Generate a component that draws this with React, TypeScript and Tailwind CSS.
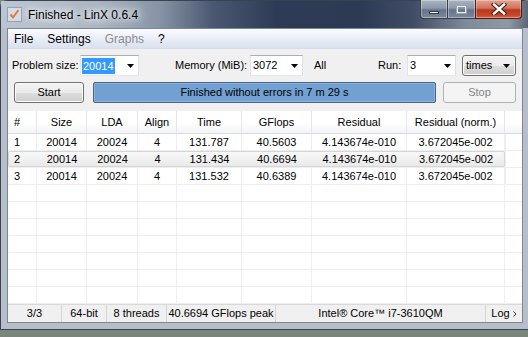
import React from "react";

const rows = [
  ["1", "20014", "20024", "4", "131.787", "40.5603", "4.143674e-010", "3.672045e-002"],
  ["2", "20014", "20024", "4", "131.434", "40.6694", "4.143674e-010", "3.672045e-002"],
  ["3", "20014", "20024", "4", "131.532", "40.6389", "4.143674e-010", "3.672045e-002"],
];

const headers = ["#", "Size", "LDA", "Align", "Time", "GFlops", "Residual", "Residual (norm.)"];

const cols = "grid w-[497px] grid-cols-[29px_50px_51px_39px_65px_70px_95px_98px]";

function Arrow() {
  return (
    <svg width="7" height="4" viewBox="0 0 7 4">
      <path d="M0 0h7L3.5 4z" fill="#000" />
    </svg>
  );
}

function Combo({ className, children }: { className: string; children: React.ReactNode }) {
  return (
    <div
      className={`flex h-[21px] items-center justify-between border border-[#abadb3] border-b-[#e3e9ef] border-l-[#e2e3ea] border-r-[#dbdfe6] bg-white pl-[1px] pr-[4px] ${className}`}
    >
      {children}
      <Arrow />
    </div>
  );
}

function TitleBar() {
  return (
    <div className="flex h-[27px] shrink-0 items-start bg-[linear-gradient(90deg,#bcc6d1_0%,#aab5c3_18%,#8794a6_30%,#4b5871_40%,#2e3b56_52%,#2d3a54_68%,#3f4c63_78%,#7f8a9a_88%,#8f99a6_96%,#5a6474_100%)]">
      <div className="ml-[6px] mt-[6px] flex h-[15px] w-[15px] items-center justify-center border border-[#8ea3bb] bg-[#d5dbe2]">
        <svg width="11" height="11" viewBox="0 0 11 11">
          <path d="M1.5 5.5l2.5 3 5.5-7.5" stroke="#e07a3c" strokeWidth="2" fill="none" />
        </svg>
      </div>
      <div className="ml-[6px] mt-[6px] text-[12px] leading-[16px] text-black [text-shadow:0_0_6px_#fff,0_0_10px_#fff,0_0_14px_rgba(255,255,255,0.9)]">
        Finished - LinX 0.6.4
      </div>
      <div className="ml-auto mr-[7px] flex h-[19px] -mt-px">
        <div className="flex w-[28px] items-end justify-center rounded-bl-[4px] border border-t-0 border-[#363e4e] bg-[linear-gradient(#a9b3c0_0%,#8d99a9_45%,#66738a_55%,#7d8899_100%)] pb-[4px] shadow-[inset_0_0_0_1px_rgba(255,255,255,0.35)]">
          <div className="h-[3px] w-[10px] border border-[#333c4b] bg-white" />
        </div>
        <div className="flex w-[27px] items-center justify-center border-b border-[#363e4e] bg-[linear-gradient(#a9b3c0_0%,#8d99a9_45%,#66738a_55%,#7d8899_100%)] shadow-[inset_0_0_0_1px_rgba(255,255,255,0.35)]">
          <div className="h-[9px] w-[11px] border border-[#9aa3ae] bg-transparent shadow-[inset_0_0_0_1px_#e8ecf0]" />
        </div>
        <div className="flex w-[47px] items-center justify-center rounded-br-[4px] border border-t-0 border-[#4e1d16] bg-[linear-gradient(#e4a393_0%,#d2725d_45%,#b6391f_55%,#c7472b_85%,#e2684a_100%)] shadow-[inset_0_0_0_1px_rgba(255,255,255,0.3)]">
          <svg width="16" height="12" viewBox="0 0 16 12">
            <path d="M3 1.5l10 9M13 1.5l-10 9" stroke="#3b1a14" strokeWidth="4.5" strokeLinecap="square" />
            <path d="M3 1.5l10 9M13 1.5l-10 9" stroke="#fff" strokeWidth="2.5" strokeLinecap="square" />
          </svg>
        </div>
      </div>
    </div>
  );
}

function MenuBar() {
  return (
    <div className="flex h-[20px] shrink-0 items-center border-b border-[#d6dde9] bg-[linear-gradient(#fbfcfe,#e6ebf5_60%,#dae1ee)] text-[12px]">
      <span className="ml-[6px]">File</span>
      <span className="ml-[14px]">Settings</span>
      <span className="ml-[14px] text-[#8d8d8d]">Graphs</span>
      <span className="ml-[14px]">?</span>
    </div>
  );
}

function Toolbar() {
  return (
    <div className="flex shrink-0 flex-col pt-[6px]">
      <div className="flex h-[21px] items-center">
        <div className="ml-[4px] w-[68px]">Problem size:</div>
        <Combo className="w-[59px]">
          <span className="bg-[#3399ff] px-px leading-[16px] text-white">20014</span>
        </Combo>
        <div className="ml-[36px] w-[75px]">Memory (MiB):</div>
        <Combo className="w-[53px]">
          <span className="pl-px">3072</span>
        </Combo>
        <div className="ml-[11px] w-[64px]">All</div>
        <div className="w-[29px]">Run:</div>
        <Combo className="w-[49px]">
          <span className="pl-px">3</span>
        </Combo>
        <div className="ml-[6px] flex h-[21px] w-[54px] items-center justify-between rounded-[3px] border border-[#707070] bg-[linear-gradient(#f2f2f2_0%,#ebebeb_50%,#dddddd_51%,#cfcfcf_100%)] pl-[3px] pr-[5px] shadow-[inset_0_0_0_1px_#fbfbfb]">
          <span>times</span>
          <Arrow />
        </div>
      </div>
      <div className="mt-[6px] flex h-[21px] items-center">
        <div className="ml-[6px] flex h-[21px] w-[70px] items-center justify-center rounded-[3px] border border-[#707070] bg-[linear-gradient(#f2f2f2_0%,#ebebeb_50%,#dddddd_51%,#cfcfcf_100%)] shadow-[inset_0_0_0_1px_#fbfbfb]">
          Start
        </div>
        <div className="ml-[9px] flex h-[21px] w-[343px] items-center justify-center rounded-[2px] border border-[#4b6380] bg-[#72a0d2] shadow-[inset_0_0_0_1px_#8db2dc]">
          Finished without errors in 7 m 29 s
        </div>
        <div className="ml-[7px] flex h-[21px] w-[73px] items-center justify-center rounded-[3px] border border-[#adb2b5] bg-[#f4f4f4] text-[#838383]">
          Stop
        </div>
      </div>
    </div>
  );
}

function Table() {
  const empty = Array.from({ length: 7 });
  return (
    <div className="mt-[8px] flex min-h-0 flex-1 flex-col overflow-hidden bg-white">
      <div className="flex h-[23px] shrink-0 border-b border-[#dcdcdc] bg-[linear-gradient(#ffffff,#ffffff_50%,#f3f4f6)]">
        <div className={cols}>
          {headers.map((h, i) => (
            <div
              key={h}
              className={`flex items-center border-r border-[#e4e6ea] ${i === 0 ? "pl-[6px]" : "justify-center"}`}
            >
              {h}
            </div>
          ))}
        </div>
        <div className="flex-1" />
      </div>
      {rows.map((r, ri) => (
        <div key={ri} className="flex h-[17px] shrink-0 border-b border-[#eeeeee]">
          {ri === 1 ? (
            <div className={`${cols} rounded-[2px] bg-[linear-gradient(#fafafa,#e8e8e8)] shadow-[inset_0_0_0_1px_#d6d6d6]`}>
              {r.map((c, ci) => (
                <div key={ci} className={`flex items-center ${ci === 0 ? "pl-[6px]" : "justify-center"}`}>
                  {c}
                </div>
              ))}
            </div>
          ) : (
            <div className={cols}>
              {r.map((c, ci) => (
                <div
                  key={ci}
                  className={`flex items-center border-r border-[#eeeeee] ${ci === 0 ? "pl-[6px]" : "justify-center"}`}
                >
                  {c}
                </div>
              ))}
            </div>
          )}
          <div className="flex-1 border-l border-[#eeeeee]" />
        </div>
      ))}
      {empty.map((_, ei) => (
        <div key={ei} className="flex h-[17px] shrink-0 border-b border-[#eeeeee]">
          <div className={cols}>
            {headers.map((h) => (
              <div key={h} className="border-r border-[#eeeeee]" />
            ))}
          </div>
          <div className="flex-1" />
        </div>
      ))}
    </div>
  );
}

function StatusBar() {
  const cells = [
    ["3/3", "w-[54px]"],
    ["64-bit", "w-[45px]"],
    ["8 threads", "w-[60px]"],
    ["40.6694 GFlops peak", "w-[109px]"],
    ["Intel® Core™ i7-3610QM", "w-[210px]"],
  ];
  return (
    <div className="flex h-[18px] shrink-0 border-t border-[#d9d9d9] bg-[#f0f0f0]">
      {cells.map(([t, w]) => (
        <div key={t} className={`flex items-center justify-center whitespace-nowrap border-r border-[#d5d5d5] ${w}`}>
          {t}
        </div>
      ))}
      <div className="flex flex-1 items-center justify-center gap-[3px]">
        <span>Log</span>
        <svg width="4" height="6" viewBox="0 0 4 6">
          <path d="M0.5 0.5L3 3 0.5 5.5" stroke="#333" strokeWidth="1" fill="none" />
        </svg>
      </div>
    </div>
  );
}

export default function App() {
  return (
    <div className="h-[337px] w-[528px] overflow-hidden bg-[#7a857c] font-['Liberation_Sans',Arial,sans-serif] text-[11px] text-black">
      <div className="flex h-[330px] w-[530px] flex-col rounded-t-[7px] border border-[#3a4250] bg-[#b6bfc9]">
        <TitleBar />
        <div className="mx-[6px] flex h-[295px] flex-col border border-[#7c8795] bg-[#f0f0f0]">
          <MenuBar />
          <Toolbar />
          <Table />
          <StatusBar />
        </div>
      </div>
    </div>
  );
}
